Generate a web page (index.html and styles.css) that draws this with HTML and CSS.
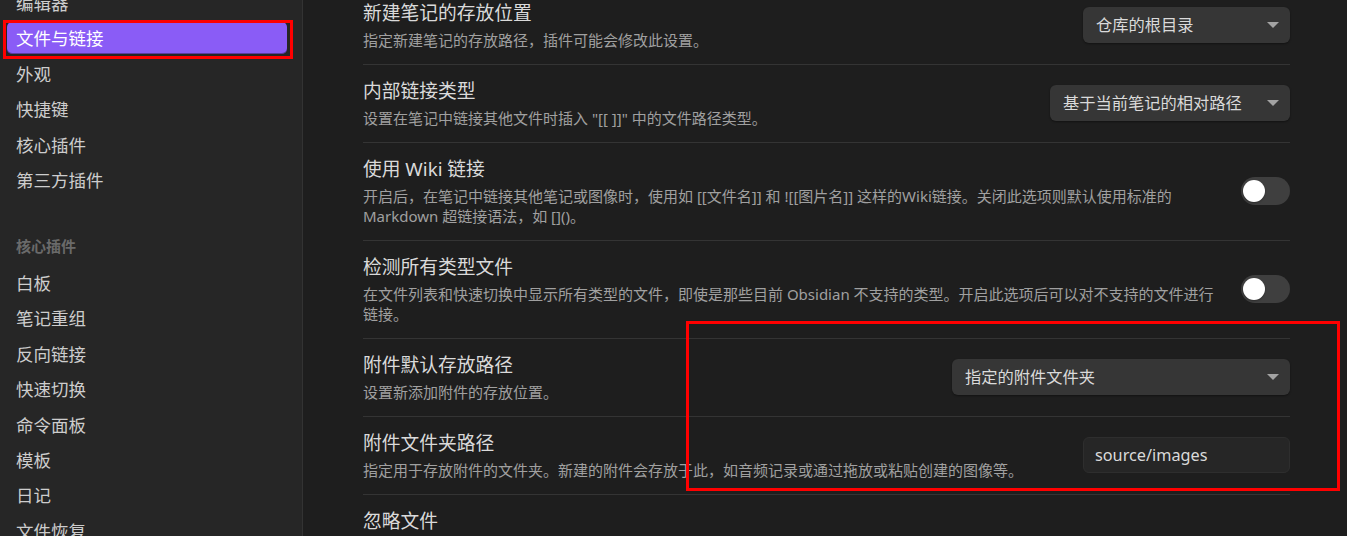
FILE: index.html
```html
<!DOCTYPE html>
<html lang="zh-CN">
<head>
<meta charset="utf-8">
<title>设置 - 文件与链接</title>
<link rel="stylesheet" href="styles.css">
</head>
<body>
<div class="app">
  <nav class="sidebar">
    <div class="nav-group">
      <div class="nav-item">编辑器</div>
      <div class="nav-item active">文件与链接</div>
      <div class="nav-item">外观</div>
      <div class="nav-item">快捷键</div>
      <div class="nav-item">核心插件</div>
      <div class="nav-item">第三方插件</div>
    </div>
    <div class="nav-header">核心插件</div>
    <div class="nav-group">
      <div class="nav-item">白板</div>
      <div class="nav-item">笔记重组</div>
      <div class="nav-item">反向链接</div>
      <div class="nav-item">快速切换</div>
      <div class="nav-item">命令面板</div>
      <div class="nav-item">模板</div>
      <div class="nav-item">日记</div>
      <div class="nav-item">文件恢复</div>
    </div>
  </nav>
  <main class="content">
    <div class="setting first">
      <div class="info">
        <div class="name">新建笔记的存放位置</div>
        <div class="desc">指定新建笔记的存放路径，插件可能会修改此设置。</div>
      </div>
      <div class="dropdown w-root">仓库的根目录<span class="caret"></span></div>
    </div>
    <div class="setting">
      <div class="info">
        <div class="name">内部链接类型</div>
        <div class="desc">设置在笔记中链接其他文件时插入 "[[ ]]" 中的文件路径类型。</div>
      </div>
      <div class="dropdown w-link">基于当前笔记的相对路径<span class="caret"></span></div>
    </div>
    <div class="setting">
      <div class="info">
        <div class="name">使用 Wiki 链接</div>
        <div class="desc">开启后，在笔记中链接其他笔记或图像时，使用如 [[文件名]] 和 ![[图片名]] 这样的Wiki链接。关闭此选项则默认使用标准的 Markdown 超链接语法，如 []()。</div>
      </div>
      <div class="toggle"><span class="knob"></span></div>
    </div>
    <div class="setting">
      <div class="info">
        <div class="name">检测所有类型文件</div>
        <div class="desc">在文件列表和快速切换中显示所有类型的文件，即使是那些目前 Obsidian 不支持的类型。开启此选项后可以对不支持的文件进行链接。</div>
      </div>
      <div class="toggle"><span class="knob"></span></div>
    </div>
    <div class="setting">
      <div class="info">
        <div class="name">附件默认存放路径</div>
        <div class="desc">设置新添加附件的存放位置。</div>
      </div>
      <div class="dropdown w-attach">指定的附件文件夹<span class="caret"></span></div>
    </div>
    <div class="setting">
      <div class="info">
        <div class="name">附件文件夹路径</div>
        <div class="desc">指定用于存放附件的文件夹。新建的附件会存放于此，如音频记录或通过拖放或粘贴创建的图像等。</div>
      </div>
      <div class="text-input">source/images</div>
    </div>
    <div class="setting">
      <div class="info">
        <div class="name">忽略文件</div>
        <div class="desc">&nbsp;</div>
      </div>
    </div>
  </main>
</div>
<div class="mark mark-nav"></div>
<div class="mark mark-attach"></div>
</body>
</html>
```

FILE: styles.css
```css
html, body {
  margin: 0;
  padding: 0;
  height: 100%;
  overflow: hidden;
  background: #1e1e1e;
  font-family: "Noto Sans", "Noto Sans CJK SC", sans-serif;
}

body {
  position: relative;
}

.app {
  display: flex;
  height: 536px;
  overflow: hidden;
}

.sidebar {
  width: 280px;
  flex: none;
  background: #262626;
  border-right: 1px solid #333333;
  padding: 0 15px 0 7px;
}

.nav-group {
  display: flex;
  flex-direction: column;
  gap: 3.4px;
}

.nav-group:first-child {
  margin-top: -13px;
}

.nav-item {
  height: 32px;
  line-height: 32px;
  padding-left: 9px;
  font-size: 17.5px;
  color: #cdcdcd;
  border-radius: 5px;
  white-space: nowrap;
}

.nav-item.active {
  background: #8a5cf6;
  color: #ffffff;
  box-shadow: inset 0 -1px 0 rgba(0, 0, 0, 0.35);
}

.nav-header {
  margin: 40px 0 11px 9px;
  height: 20px;
  line-height: 20px;
  font-size: 15px;
  font-weight: 600;
  color: #6a6a6a;
}

.content {
  flex: 1;
  padding: 0 57px 0 60px;
  margin-top: -14px;
}

.setting {
  display: flex;
  align-items: center;
  border-top: 1px solid #343434;
  padding: 13px 0 14px;
}

.setting.first {
  border-top-color: transparent;
}

.info {
  flex: 1;
  margin-right: 20px;
}

.name {
  font-size: 18.75px;
  line-height: 26px;
  color: #dadada;
}

.desc {
  margin-top: 4px;
  font-size: 15px;
  line-height: 20px;
  color: #a0a0a0;
}

.dropdown {
  position: relative;
  flex: none;
  box-sizing: border-box;
  height: 36px;
  line-height: 36px;
  padding-left: 13px;
  font-size: 16.25px;
  color: #dadada;
  background: #363636;
  border-radius: 6px;
  box-shadow: 0 1px 2px rgba(0, 0, 0, 0.4);
}

.w-root { width: 207px; }
.w-link { width: 240px; }
.w-attach { width: 338px; }

.caret {
  position: absolute;
  right: 11px;
  top: 15px;
  width: 0;
  height: 0;
  border-left: 6px solid transparent;
  border-right: 6px solid transparent;
  border-top: 6px solid #a3a3a3;
}

.text-input {
  flex: none;
  box-sizing: border-box;
  width: 207px;
  height: 36px;
  line-height: 34px;
  padding-left: 11px;
  font-size: 16.25px;
  color: #dadada;
  background: #262626;
  border: 1px solid #2e2e2e;
  border-radius: 6px;
}

.toggle {
  flex: none;
  position: relative;
  width: 49px;
  height: 28px;
  border-radius: 14px;
  background: #3f3f3f;
}

.knob {
  position: absolute;
  left: 2px;
  top: 3px;
  width: 22px;
  height: 22px;
  border-radius: 50%;
  background: #ffffff;
  box-shadow: 0 1px 2px rgba(0, 0, 0, 0.3);
}

.mark {
  position: absolute;
  box-sizing: border-box;
  border: 3px solid #ff0000;
  pointer-events: none;
}

.mark-nav {
  left: 3px;
  top: 20px;
  width: 290px;
  height: 39px;
}

.mark-attach {
  left: 686px;
  top: 321px;
  width: 654px;
  height: 170px;
}
```
